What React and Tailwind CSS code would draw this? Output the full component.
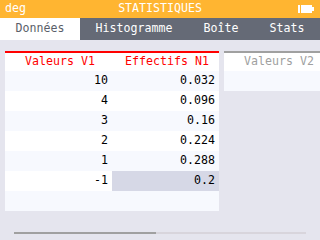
const values = [
  { v: "10", n: "0.032" },
  { v: "4", n: "0.096" },
  { v: "3", n: "0.16" },
  { v: "2", n: "0.224" },
  { v: "1", n: "0.288" },
  { v: "-1", n: "0.2", selected: true },
  { v: "", n: "" },
];

const tabs = [
  { label: "Données", width: "w-[80px]", active: true },
  { label: "Histogramme", width: "w-[108px]" },
  { label: "Boîte", width: "w-[66px]" },
  { label: "Stats", width: "w-[66px]" },
];

function Battery() {
  return (
    <svg width="17" height="8" viewBox="0 0 17 8">
      <rect x="0" y="0" width="2" height="8" fill="#fff" />
      <rect x="3" y="0" width="11" height="8" fill="#fff" />
      <rect x="14" y="2" width="2" height="4" fill="#fff" />
    </svg>
  );
}

export default function App() {
  return (
    <div className="w-[320px] h-[240px] overflow-hidden flex flex-col bg-[#e5e5ee] text-[11.6px] leading-none" style={{ fontFamily: '"DejaVu Sans Mono", monospace' }}>
      {/* Barre de titre */}
      <div className="h-[18px] bg-[#ffb531] text-white flex items-center pl-[5px] pr-[3px]">
        <span className="flex-1">deg</span>
        <span>STATISTIQUES</span>
        <span className="flex-1 flex justify-end pr-[2px]">
          <Battery />
        </span>
      </div>

      {/* Onglets */}
      <div className="h-[22px] flex bg-[#656a76]">
        {tabs.map((t) => (
          <div
            key={t.label}
            className={`${t.width} flex items-center justify-center ${
              t.active ? "bg-white text-[#5a5e69]" : "text-white"
            }`}
          >
            {t.label}
          </div>
        ))}
      </div>

      {/* Tableau */}
      <div className="flex-1 flex flex-col pt-[11px] pl-[5px]">
        <div className="flex gap-[5px]">
          <div className="w-[214px] flex flex-col">
            <div className="h-[2px] bg-[#ff0000]" />
            <div className="h-[18px] flex bg-white text-[#ff0000]">
              <div className="w-[107px] flex items-center justify-center pl-[3px]">Valeurs V1</div>
              <div className="w-[107px] flex items-center justify-center pl-[3px]">Effectifs N1</div>
            </div>
            {values.map((r, i) => (
              <div
                key={i}
                className={`h-[20px] flex text-black ${i % 2 === 0 ? "bg-[#f7f9fe]" : "bg-white"}`}
              >
                <div className="w-[107px] flex items-center justify-end pr-[4px]">{r.v}</div>
                <div
                  className={`w-[107px] flex items-center justify-end pr-[4px] ${
                    r.selected ? "bg-[#d6d8e6]" : ""
                  }`}
                >
                  {r.n}
                </div>
              </div>
            ))}
          </div>

          <div className="w-[107px] shrink-0 flex flex-col">
            <div className="h-[2px] bg-[#a0a0a0]" />
            <div className="h-[18px] bg-white text-[#a0a0a0] flex items-center justify-center pl-[3px]">
              Valeurs V2
            </div>
            <div className="h-[20px] bg-[#f7f9fe]" />
          </div>
        </div>

        {/* Barre de défilement */}
        <div className="mt-[21px] ml-[9px] w-[292px] h-[2px] bg-[#d8d5dc] flex">
          <div className="w-[142px] h-[2px] bg-[#a0a0a0]" />
        </div>
      </div>
    </div>
  );
}
